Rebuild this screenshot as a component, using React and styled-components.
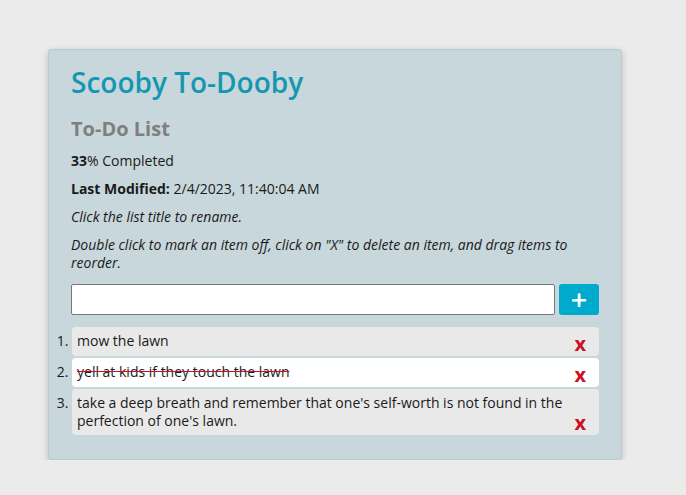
import React from "react";
import styled, { createGlobalStyle } from "styled-components";

const GlobalStyle = createGlobalStyle`
  body {
    margin: 0;
    background-color: #ebebeb;
    font-family: "Open Sans", "Noto Sans", sans-serif;
    color: #1a1a1a;
  }
`;

const Card = styled.section`
  width: 574px;
  margin: 49px 0 0 48px;
  box-sizing: border-box;
  padding: 10px 22px 24px 22px;
  background-color: #c8d7db;
  border: 1px solid #bccbcf;
  border-radius: 3px;
  box-shadow: 0 2px 6px rgba(0, 0, 0, 0.2);
`;

const Title = styled.h1`
  margin: 0 0 11px;
  font-size: 28px;
  font-weight: 600;
  color: #1597b2;
  line-height: 44px;
`;

const ListTitle = styled.h2`
  margin: 0 0 9px;
  font-size: 20px;
  font-weight: 700;
  color: #7f7f7f;
  line-height: 28px;
`;

const Info = styled.p`
  margin: 0 0 10px;
  font-size: 14px;
  line-height: 18px;
  font-style: ${(p) => (p.$italic ? "italic" : "normal")};
`;

const AddRow = styled.div`
  display: flex;
  align-items: center;
  gap: 4px;
  margin-top: 12px;
`;

const TextInput = styled.input`
  flex: 1;
  height: 31px;
  box-sizing: border-box;
  border: 1px solid #767676;
  border-radius: 2px;
  background: #fff;
`;

const AddButton = styled.button`
  width: 40px;
  height: 31px;
  border: none;
  border-radius: 3px;
  background-color: #00aacc;
  color: #fff;
  font-size: 22px;
  font-weight: 700;
  line-height: 1;
  padding: 0;
  font-family: "DejaVu Sans", sans-serif;
`;

const List = styled.ol`
  margin: 12px 0 0;
  padding-left: 1px;
  display: flex;
  flex-direction: column;
  gap: 2px;
  font-size: 14px;
  line-height: 18px;
`;

const Item = styled.li`
  background-color: ${(p) => (p.$done ? "#ffffff" : "#e9e9e9")};
  border-radius: 4px;
  padding: 5px 13px 5px 5px;
  &::marker {
    color: #1a1a1a;
  }
`;

const ItemRow = styled.div`
  display: flex;
  align-items: flex-end;
  min-height: 19px;
`;

const ItemText = styled.span`
  flex: 1;
  align-self: flex-start;
  text-decoration: ${(p) => (p.$done ? "line-through" : "none")};
  text-decoration-color: #c8102e;
`;

const DeleteX = styled.span`
  color: #cc1122;
  font-weight: 700;
  font-size: 20px;
  line-height: 18px;
  margin-bottom: -2px;
`;

const items = [
  { text: "mow the lawn", done: false },
  { text: "yell at kids if they touch the lawn", done: true },
  {
    text: "take a deep breath and remember that one's self-worth is not found in the perfection of one's lawn.",
    done: false,
  },
];

const App = () => {
  return (
    <>
      <GlobalStyle />
      <Card>
        <Title>Scooby To-Dooby</Title>
        <ListTitle>To-Do List</ListTitle>
        <Info>
          <b>33</b>% Completed
        </Info>
        <Info>
          <b>Last Modified:</b> 2/4/2023, 11:40:04 AM
        </Info>
        <Info $italic>Click the list title to rename.</Info>
        <Info $italic>
          Double click to mark an item off, click on "X" to delete an item, and drag items to reorder.
        </Info>
        <AddRow>
          <TextInput type="text" />
          <AddButton>+</AddButton>
        </AddRow>
        <List>
          {items.map((item) => (
            <Item key={item.text} $done={item.done}>
              <ItemRow>
                <ItemText $done={item.done}>{item.text}</ItemText>
                <DeleteX>x</DeleteX>
              </ItemRow>
            </Item>
          ))}
        </List>
      </Card>
    </>
  );
};

export default App;
